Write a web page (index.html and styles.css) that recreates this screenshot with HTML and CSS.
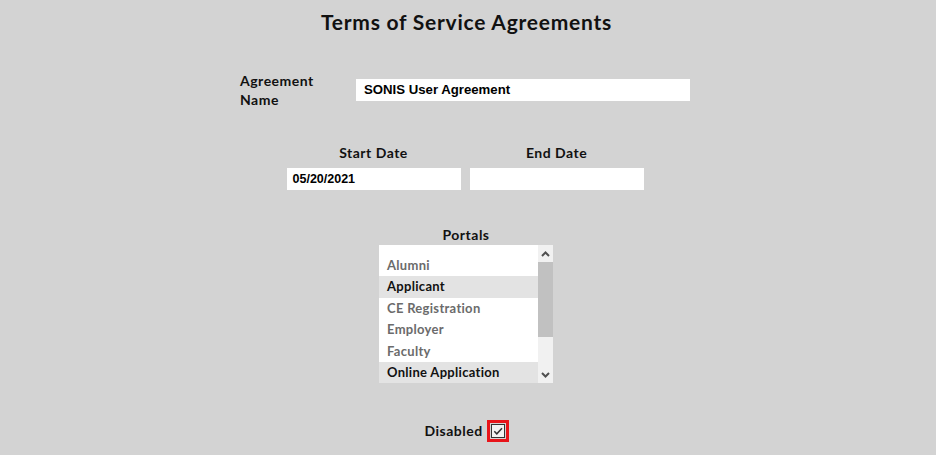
FILE: index.html
```html
<!DOCTYPE html>
<html>
<head>
<meta charset="utf-8">
<link rel="stylesheet" href="styles.css">
</head>
<body>
<div class="page">
  <h1 class="title">Terms of Service Agreements</h1>
  <div class="form">
    <div class="row-name">
      <label class="lbl name-lbl">Agreement<br>Name</label>
      <div class="input name-input">SONIS User Agreement</div>
    </div>
    <div class="dates">
      <div class="date-col">
        <div class="lbl center">Start Date</div>
        <div class="input date-input">05/20/2021</div>
      </div>
      <div class="date-col">
        <div class="lbl center">End Date</div>
        <div class="input date-input"></div>
      </div>
    </div>
    <div class="portals">
      <div class="lbl center">Portals</div>
      <div class="listbox">
        <div class="items">
          <div class="item">Alumni</div>
          <div class="item sel">Applicant</div>
          <div class="item">CE Registration</div>
          <div class="item">Employer</div>
          <div class="item">Faculty</div>
          <div class="item sel">Online Application</div>
        </div>
        <div class="scrollbar">
          <div class="arrow">
            <svg width="15" height="16" viewBox="0 0 15 16"><path d="M4 10 L7.5 6.5 L11 10" fill="none" stroke="#505050" stroke-width="2"/></svg>
          </div>
          <div class="thumb"></div>
          <div class="track"></div>
          <div class="arrow">
            <svg width="15" height="16" viewBox="0 0 15 16"><path d="M4 6 L7.5 9.5 L11 6" fill="none" stroke="#505050" stroke-width="2"/></svg>
          </div>
        </div>
      </div>
    </div>
    <div class="disabled-row">
      <span class="lbl">Disabled</span>
      <span class="check-wrap">
        <span class="check">
          <svg width="12" height="12" viewBox="0 0 12 12"><path d="M2.3 6.3 L4.8 8.8 L10 3.2" fill="none" stroke="#333" stroke-width="1.5"/></svg>
        </span>
      </span>
    </div>
  </div>
</div>
</body>
</html>
```

FILE: styles.css
```css
html, body {
  margin: 0;
  padding: 0;
  background: #d3d3d3;
}
body {
  width: 936px;
  height: 455px;
  overflow: hidden;
  font-family: "Lato", "Open Sans", sans-serif;
  color: #111;
}
.page {
  display: flex;
  flex-direction: column;
  align-items: center;
}
.title {
  margin: 8px 0 0 0;
  font-size: 21px;
  line-height: 28px;
  font-weight: 700;
  letter-spacing: 0.75px;
  color: #111;
  padding-right: 3px;
}
.form {
  width: 450px;
  margin-left: -6px;
  display: flex;
  flex-direction: column;
  align-items: center;
}
.lbl {
  font-weight: 700;
  font-size: 14px;
  letter-spacing: 0.5px;
  color: #111;
}
.center {
  text-align: center;
}
.row-name {
  align-self: stretch;
  display: flex;
  align-items: flex-start;
  margin-top: 35px;
}
.name-lbl {
  width: 116px;
  line-height: 19px;
}
.input {
  background: #fff;
  height: 22px;
  box-sizing: border-box;
  font-family: "Liberation Sans", Arial, sans-serif;
  font-weight: 700;
  font-size: 12.5px;
  line-height: 22px;
  color: #000;
}
.name-input {
  width: 334px;
  margin-top: 8px;
  padding-left: 8px;
  font-size: 13.2px;
}
.dates {
  display: flex;
  gap: 9px;
  margin-top: 34px;
}
.date-col {
  width: 174px;
  display: flex;
  flex-direction: column;
}
.date-col .lbl {
  line-height: 20px;
  margin-bottom: 5px;
}
.date-input {
  padding-left: 6px;
}
.portals {
  margin-top: 35px;
  margin-left: 2px;
  display: flex;
  flex-direction: column;
  align-items: center;
}
.portals .lbl {
  line-height: 20px;
  margin-bottom: 0;
}
.listbox {
  width: 174px;
  height: 138px;
  background: #fff;
  display: flex;
}
.items {
  flex: 1;
  padding-top: 9.5px;
  overflow: hidden;
}
.item {
  height: 21.5px;
  line-height: 21.5px;
  padding-left: 8px;
  font-size: 13px;
  font-weight: 700;
  letter-spacing: 0.3px;
  color: #6b6b6b;
}
.item.sel {
  background: #e3e3e3;
  color: #111;
}
.scrollbar {
  width: 15px;
  background: #f1f1f1;
  display: flex;
  flex-direction: column;
}
.arrow {
  height: 17px;
  display: flex;
  align-items: center;
  justify-content: center;
}
.thumb {
  height: 75px;
  background: #c1c1c1;
}
.track {
  flex: 1;
}
.disabled-row {
  margin-top: 37px;
  margin-left: 3px;
  display: flex;
  align-items: center;
  gap: 4px;
}
.disabled-row .lbl {
  line-height: 22px;
}
.check-wrap {
  width: 22px;
  height: 22px;
  box-sizing: border-box;
  border: 3px solid #e8141a;
  display: flex;
  align-items: center;
  justify-content: center;
}
.check {
  width: 14px;
  height: 14px;
  box-sizing: border-box;
  border: 1px solid #333;
  background: #f2f2f2;
  display: flex;
  align-items: center;
  justify-content: center;
}
```
